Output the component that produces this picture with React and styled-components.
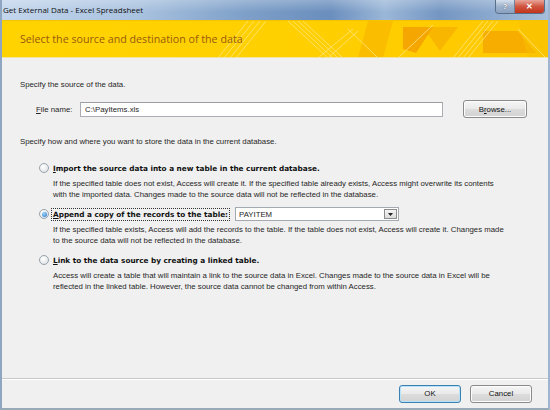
import React from 'react';
import styled, { createGlobalStyle } from 'styled-components';

const GlobalStyle = createGlobalStyle`
    html, body {
        margin: 0;
        padding: 0;
        background: #f0f0f0;
    }
    body {
        font-family: 'Liberation Sans', Arial, sans-serif;
        font-size: 7.8px;
        color: #262626;
    }
`;

const Radio = ({ checked }) => (
    <RadioDot checked={checked}>
        {checked && <RadioInner />}
    </RadioDot>
);

const BannerArt = () => (
    <svg width='330' height='37' viewBox='0 0 330 37' preserveAspectRatio='none'>
        <polygon points='150,0 175,0 165,37 140,37' fill='#f7b300' opacity='0.6' />
        <polygon points='185,6 215,6 198,32 185,28' fill='#f29a00' opacity='0.75' />
        <polygon points='205,6 240,6 222,30' fill='#f5a800' opacity='0.6' />
        <polygon points='265,10 300,10 318,32 265,32' fill='#f3a000' opacity='0.7' />
        <polygon points='300,0 330,0 330,37 310,37' fill='#f8c000' opacity='0.5' />
        {[0, 6, 12, 18].map((d) => (
            <line key={'a' + d} x1={d} y1='37' x2={d + 30} y2='0' stroke='#ffe680' strokeWidth='0.8' />
        ))}
        {[0, 5, 10, 15].map((d) => (
            <line key={'b' + d} x1={70 + d} y1='0' x2={110 + d} y2='37' stroke='#ffe680' strokeWidth='0.8' />
        ))}
        <line x1='110' y1='37' x2='140' y2='10' stroke='#ffe680' strokeWidth='0.8' />
        <line x1='100' y1='37' x2='135' y2='8' stroke='#ffe680' strokeWidth='0.8' />
        <line x1='130' y1='8' x2='160' y2='37' stroke='#ffe680' strokeWidth='0.8' />
        <line x1='180' y1='37' x2='215' y2='4' stroke='#ffe680' strokeWidth='0.8' />
        {[0, 5, 10, 15].map((d) => (
            <line key={'c' + d} x1={235 + d} y1='37' x2={265 + d} y2='0' stroke='#ffe680' strokeWidth='0.8' />
        ))}
        <line x1='300' y1='8' x2='328' y2='37' stroke='#ffe680' strokeWidth='0.8' />
    </svg>
);

const App = () => {
    return (
        <>
            <GlobalStyle />
            <Window>
                <TitleBar>
                    <TitleText>Get External Data - Excel Spreadsheet</TitleText>
                    <CaptionButtons>
                        <HelpButton>?</HelpButton>
                        <CloseButton>✕</CloseButton>
                    </CaptionButtons>
                </TitleBar>
                <Banner>
                    <BannerTitle>Select the source and destination of the data</BannerTitle>
                    <BannerDecor>
                        <BannerArt />
                    </BannerDecor>
                </Banner>
                <Body>
                    <Line>Specify the source of the data.</Line>
                    <FileRow>
                        <FileLabel>
                            <u>F</u>ile name:
                        </FileLabel>
                        <TextBox>C:\PayItems.xls</TextBox>
                        <Button width='64px'>
                            B<u>r</u>owse...
                        </Button>
                    </FileRow>
                    <Line>Specify how and where you want to store the data in the current database.</Line>
                    <Options>
                        <Option>
                            <OptionHead>
                                <Radio />
                                <OptionLabel>
                                    <u>I</u>mport the source data into a new table in the current database.
                                </OptionLabel>
                            </OptionHead>
                            <OptionText>
                                If the specified table does not exist, Access will create it. If the specified table
                                already exists, Access might overwrite its contents
                                <br />
                                with the imported data. Changes made to the source data will not be reflected in the
                                database.
                            </OptionText>
                        </Option>
                        <Option>
                            <OptionHead>
                                <Radio checked />
                                <OptionLabel focused>
                                    <u>A</u>ppend a copy of the records to the table:
                                </OptionLabel>
                                <Select>
                                    <SelectValue>PAYITEM</SelectValue>
                                    <SelectArrow>
                                        <svg width='5' height='3' viewBox='0 0 5 3'>
                                            <polygon points='0,0 5,0 2.5,3' fill='#222' />
                                        </svg>
                                    </SelectArrow>
                                </Select>
                            </OptionHead>
                            <OptionText>
                                If the specified table exists, Access will add the records to the table. If the table
                                does not exist, Access will create it. Changes made
                                <br />
                                to the source data will not be reflected in the database.
                            </OptionText>
                        </Option>
                        <Option>
                            <OptionHead>
                                <Radio />
                                <OptionLabel>
                                    <u>L</u>ink to the data source by creating a linked table.
                                </OptionLabel>
                            </OptionHead>
                            <OptionText>
                                Access will create a table that will maintain a link to the source data in Excel.
                                Changes made to the source data in Excel will be
                                <br />
                                reflected in the linked table. However, the source data cannot be changed from within
                                Access.
                            </OptionText>
                        </Option>
                    </Options>
                </Body>
                <Footer>
                    <Button width='62px' primary>
                        OK
                    </Button>
                    <Button width='62px'>Cancel</Button>
                </Footer>
            </Window>
        </>
    );
};

const Window = styled.div`
    width: 550px;
    height: 410px;
    box-sizing: border-box;
    display: flex;
    flex-direction: column;
    background: #f0f0f0;
    border-left: 2px solid #8ea6c2;
    border-right: 2px solid #9fb5cf;
    border-bottom: 2px solid #9aa9b8;
    overflow: hidden;
`;

const TitleBar = styled.div`
    height: 20px;
    flex-shrink: 0;
    display: flex;
    align-items: flex-start;
    margin: 0 -2px;
    background:
        linear-gradient(to bottom, rgba(255, 255, 255, 0.25), rgba(255, 255, 255, 0) 60%),
        linear-gradient(
            to right,
            #c3d6ec 0%,
            #a9c2df 25%,
            #7d9fc8 45%,
            #6a8ebd 60%,
            #9bb7d8 70%,
            #7496c2 80%,
            #a6bfdc 100%
        );
`;

const TitleText = styled.div`
    font-family: 'Open Sans', 'Liberation Sans', sans-serif;
    font-size: 8px;
    color: #111;
    padding: 4px 0 0 3px;
`;

const CaptionButtons = styled.div`
    margin-left: auto;
    margin-right: 5px;
    display: flex;
    height: 13px;
    border: 1px solid #5a6f8a;
    border-top: none;
    border-radius: 0 0 4px 4px;
    overflow: hidden;
`;

const HelpButton = styled.div`
    width: 18px;
    display: flex;
    align-items: center;
    justify-content: center;
    font-size: 8px;
    font-weight: bold;
    color: #fff;
    text-shadow: 0 0 1px #334;
    background: linear-gradient(to bottom, #d4e0ee, #9fb3cc 50%, #8aa2c0);
    border-right: 1px solid #6f839c;
`;

const CloseButton = styled.div`
    width: 29px;
    display: flex;
    align-items: center;
    justify-content: center;
    font-size: 8px;
    font-weight: bold;
    color: #fff;
    background: linear-gradient(to bottom, #e9a69a, #d0553f 50%, #c2341c);
`;

const Banner = styled.div`
    height: 36px;
    flex-shrink: 0;
    display: flex;
    align-items: center;
    position: relative;
    background: linear-gradient(to right, #ffd300 0%, #ffd000 50%, #ffc800 100%);
    border-top: 1px solid #f5c400;
    border-bottom: 1px solid #f3e3a0;
    overflow: hidden;
`;

const BannerTitle = styled.div`
    font-family: 'Open Sans', 'Liberation Sans', sans-serif;
    font-size: 10.7px;
    color: #985a10;
    padding-left: 18px;
    position: relative;
    z-index: 1;
`;

const BannerDecor = styled.div`
    position: absolute;
    right: 0;
    top: 0;
    bottom: 0;
    width: 330px;
    display: flex;
`;

const Body = styled.div`
    flex: 1;
    padding: 21px 0 0 18px;
    display: flex;
    flex-direction: column;
`;

const Line = styled.div`
    line-height: 11px;
`;

const FileRow = styled.div`
    display: flex;
    align-items: center;
    margin: 10px 0 18px 16px;
    height: 18px;
`;

const FileLabel = styled.div`
    width: 44px;
`;

const TextBox = styled.div`
    width: 363px;
    height: 15px;
    box-sizing: border-box;
    border: 1px solid #abadb3;
    border-top-color: #9a9da4;
    background: #fff;
    padding: 0 4px;
    display: flex;
    align-items: center;
    margin-right: 20px;
`;

const Button = styled.div`
    width: ${(p) => p.width};
    height: 18px;
    box-sizing: border-box;
    display: flex;
    align-items: center;
    justify-content: center;
    border: 1px solid ${(p) => (p.primary ? '#3c7fb1' : '#8a8a8a')};
    border-radius: 3px;
    background: linear-gradient(to bottom, #f6f6f6 0%, #e9e9e9 50%, #dcdcdc 51%, #d2d2d2 100%);
    box-shadow: inset 0 0 0 1px ${(p) => (p.primary ? '#b5e3fa' : '#fcfcfc')};
    color: #111;
`;

const Options = styled.div`
    display: flex;
    flex-direction: column;
    gap: 6px;
    margin: 13px 0 0 19px;
`;

const Option = styled.div`
    display: flex;
    flex-direction: column;
`;

const OptionHead = styled.div`
    display: flex;
    align-items: center;
    height: 16px;
    margin-bottom: 2px;
`;

const RadioDot = styled.div`
    width: 10px;
    height: 10px;
    box-sizing: border-box;
    border-radius: 50%;
    border: 1px solid #9aa2ab;
    background: radial-gradient(circle at 40% 35%, #ffffff, #d8dde3);
    margin-right: 2px;
    display: flex;
    align-items: center;
    justify-content: center;
`;

const RadioInner = styled.div`
    width: 5px;
    height: 5px;
    border-radius: 50%;
    background: radial-gradient(circle at 40% 35%, #9fd6ff, #1c6fc4);
`;

const OptionLabel = styled.div`
    font-family: 'DejaVu Sans', Verdana, sans-serif;
    font-weight: bold;
    font-size: 7.3px;
    color: #111;
    padding: 1px 1px;
    border: 1px dotted ${(p) => (p.focused ? '#333' : 'transparent')};
`;

const OptionText = styled.div`
    padding-left: 14px;
    line-height: 11px;
`;

const Select = styled.div`
    margin-left: 5px;
    width: 164px;
    height: 14px;
    box-sizing: border-box;
    border: 1px solid #a5a9b0;
    background: #fff;
    display: flex;
    align-items: stretch;
`;

const SelectValue = styled.div`
    flex: 1;
    display: flex;
    align-items: center;
    padding-left: 3px;
`;

const SelectArrow = styled.div`
    width: 11px;
    margin: 1px;
    border: 1px solid #8c8c8c;
    background: linear-gradient(to bottom, #f4f4f4, #dadada);
    display: flex;
    align-items: center;
    justify-content: center;
`;

const Footer = styled.div`
    height: 29px;
    flex-shrink: 0;
    display: flex;
    align-items: center;
    justify-content: flex-end;
    gap: 9px;
    padding-right: 16px;
    border-top: 1px solid #c9c9c9;
    box-shadow: inset 0 1px 0 #ffffff;
`;

export default App;
